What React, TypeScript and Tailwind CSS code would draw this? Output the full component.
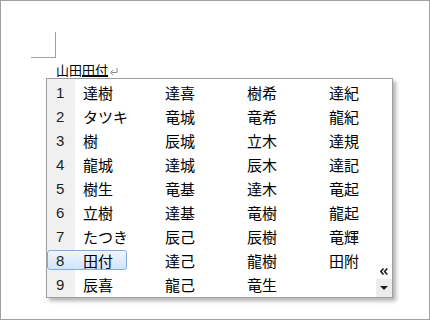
import React from "react";

const rows: string[][] = [
  ["達樹", "達喜", "樹希", "達紀"],
  ["タツキ", "竜城", "竜希", "龍紀"],
  ["樹", "辰城", "立木", "達規"],
  ["龍城", "達城", "辰木", "達記"],
  ["樹生", "竜基", "達木", "竜起"],
  ["立樹", "達基", "竜樹", "龍起"],
  ["たつき", "辰己", "辰樹", "竜輝"],
  ["田付", "達己", "龍樹", "田附"],
  ["辰喜", "龍己", "竜生", ""],
];

const jp = "font-['Noto_Sans_CJK_JP','Noto_Sans',sans-serif]";
const num = "font-['Liberation_Sans',Arial,sans-serif]";

function Row({ i, cells }: { i: number; cells: string[] }) {
  const selected = i === 8;
  return (
    <div className="flex h-[24px] items-center">
      <div
        className={
          selected
            ? "flex h-[20px] w-[80px] items-center rounded-[3px] border border-[#84acdd] bg-gradient-to-b from-[#eef5fd] to-[#d2e4fb]"
            : "flex h-[24px] w-[80px] items-center"
        }
      >
        <div
          className={
            (selected ? "" : "h-[24px] bg-[#f0f0f0] ") +
            `flex w-[28px] shrink-0 items-center ${selected ? "pl-[8px]" : "pl-[9px]"} ${num} text-[15px] leading-[15px] text-[#1e1e1e]`
          }
        >
          {i}
        </div>
        <div className={`${selected ? "pl-[7px]" : "pl-[8px]"} ${jp} whitespace-nowrap text-[15px] leading-[15px] text-black`}>
          {cells[0]}
        </div>
      </div>
      <div className="w-[30px] shrink-0" />
      {cells.slice(1).map((c, k) => (
        <div
          key={k}
          className={`${k < 2 ? "w-[82px]" : "flex-1"} shrink-0 pl-[8px] ${jp} whitespace-nowrap text-[15px] leading-[15px] text-black`}
        >
          {c}
        </div>
      ))}
    </div>
  );
}

export default function App() {
  return (
    <div className="relative h-[320px] w-[430px] overflow-hidden border border-[#a0a0a0] bg-white">
      <div className="ml-[30px] mt-[31px] h-[26px] w-[25px] border-b border-r border-[#a0a0a0]" />
      <div className={`ml-[55px] mt-[5px] flex h-[13px] items-start ${jp} text-[13px] leading-[13px] text-black`}>
        <span>山田</span>
        <span className="box-content inline-block h-[12px] border-b-2 border-black">田付</span>
        <svg width="8" height="7" viewBox="0 0 8 7" className="ml-[2px] mt-[5px]">
          <path d="M7 0 V4.5 H1.5" stroke="#8a8a8a" strokeWidth="1" fill="none" />
          <path d="M0.5 4.5 L3 2 M0.5 4.5 L3 7" stroke="#8a8a8a" strokeWidth="1" fill="none" />
        </svg>
      </div>

      <div className="absolute left-[45px] top-[77px] flex h-[220px] w-[347px] border border-[#a0a0a0] bg-white shadow-[3px_3px_4px_rgba(0,0,0,0.3)]">
        <div className="flex flex-1 flex-col bg-[linear-gradient(to_right,#f0f0f0_28px,white_28px)] pt-[1px]">
          {rows.map((r, idx) => (
            <Row key={idx} i={idx + 1} cells={r} />
          ))}
        </div>
        <div className="flex w-[16px] flex-col items-center justify-end">
          <svg width="8" height="7" viewBox="0 0 8 7" className="mb-[4px]">
            <path d="M3.5 0.5 L0.8 3.5 L3.5 6.5 M7.3 0.5 L4.6 3.5 L7.3 6.5" stroke="#1a1a1a" strokeWidth="1.6" fill="none" />
          </svg>
          <div className="flex h-[18px] w-[16px] items-center justify-center bg-[#ececec]">
            <svg width="8" height="4" viewBox="0 0 8 4">
              <path d="M0 0 H8 L4 4 Z" fill="#1a1a1a" />
            </svg>
          </div>
        </div>
      </div>
    </div>
  );
}
